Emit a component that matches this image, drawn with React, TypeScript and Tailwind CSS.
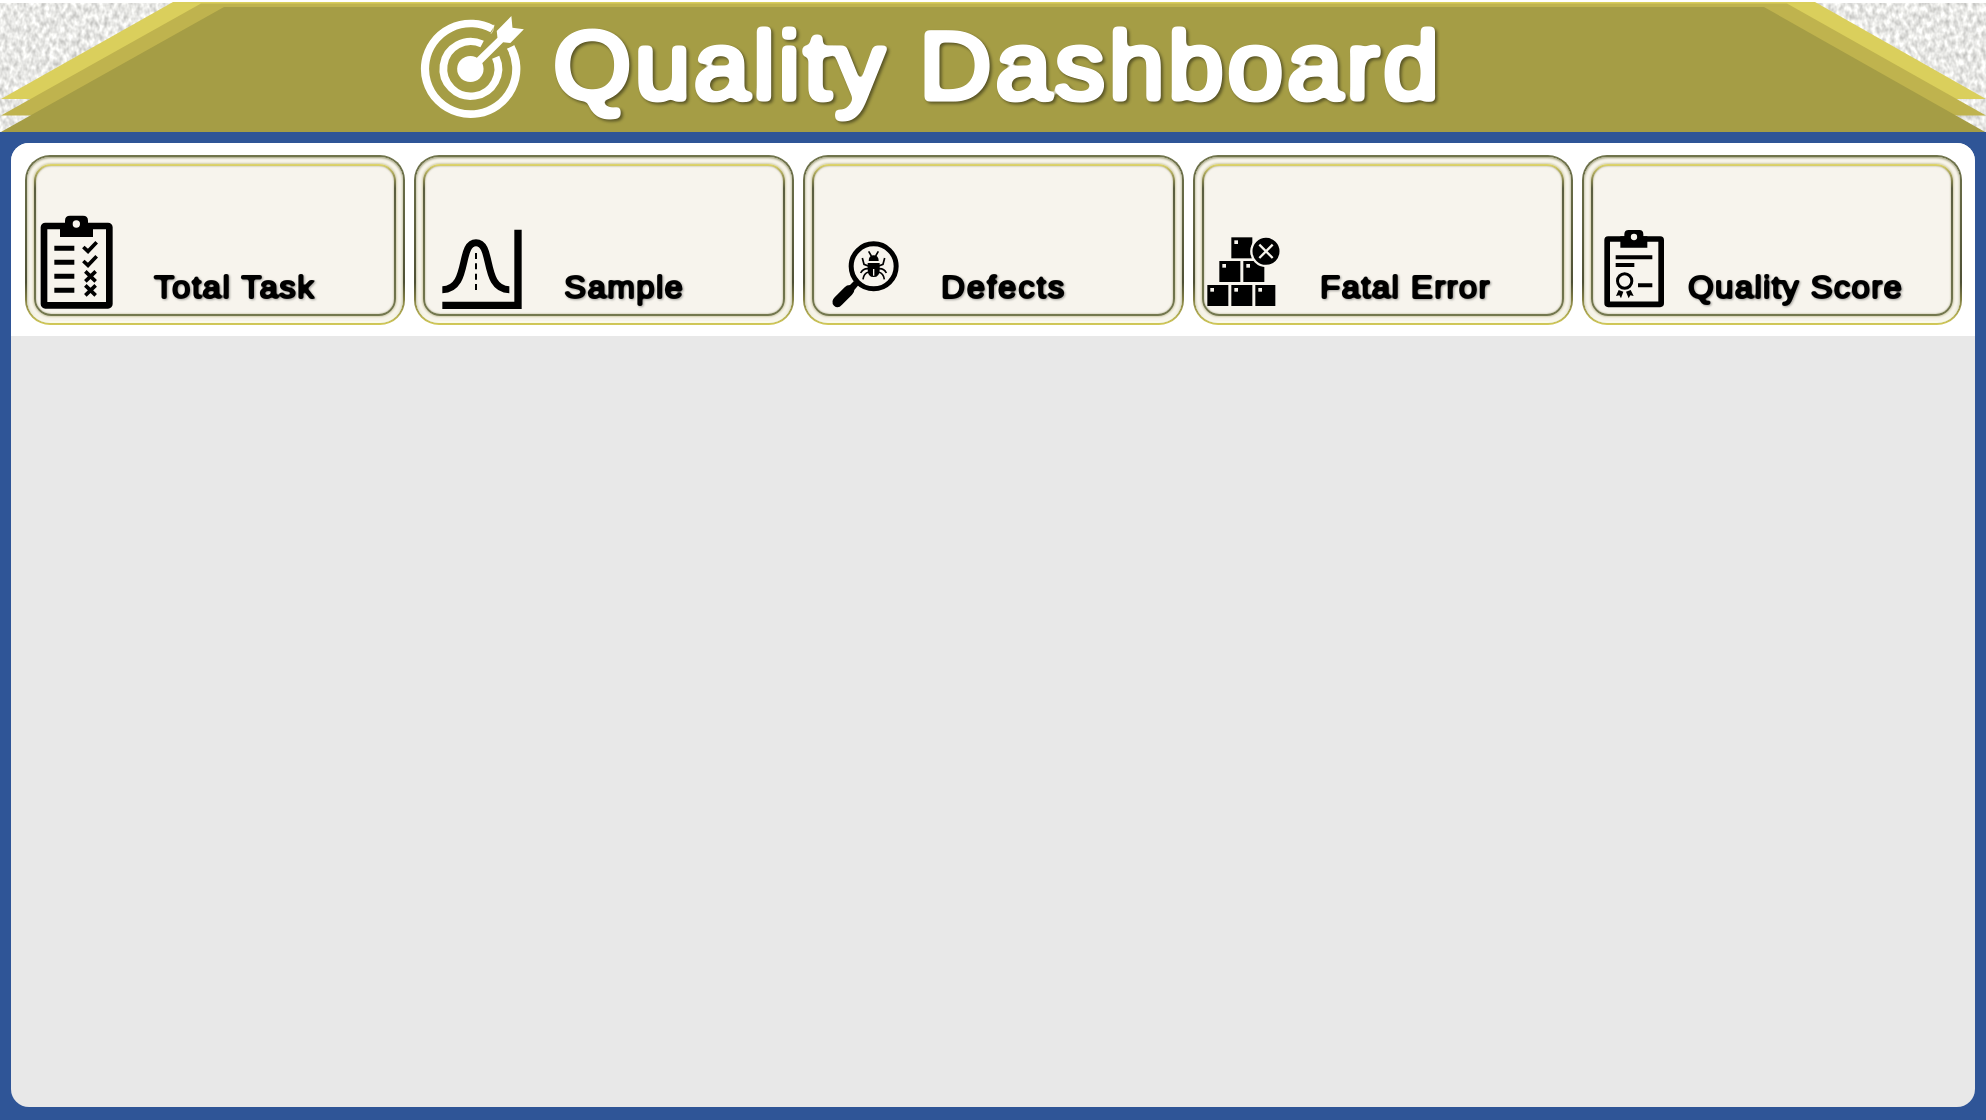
import type { ReactNode } from "react";

function Ribbon() {
  return (
    <svg className="absolute inset-0 h-full w-full" viewBox="0 0 1986 132" preserveAspectRatio="none" aria-hidden="true">
      <defs>
        <filter id="paper" x="0" y="0" width="100%" height="100%" colorInterpolationFilters="sRGB">
          <feTurbulence type="fractalNoise" baseFrequency="0.22 0.15" numOctaves="2" seed="7" />
          <feColorMatrix values="0.42 0 0 0 0.7  0.42 0 0 0 0.7  0.42 0 0 0 0.69  0 0 0 0 1" />
        </filter>
        <filter id="round-lg" x="-5%" y="-10%" width="110%" height="120%" colorInterpolationFilters="sRGB">
          <feGaussianBlur stdDeviation="2.4" />
          <feColorMatrix values="1 0 0 0 0  0 1 0 0 0  0 0 1 0 0  0 0 0 7 -3" />
        </filter>
        <filter id="round-sm" x="-5%" y="-10%" width="110%" height="120%" colorInterpolationFilters="sRGB">
          <feGaussianBlur stdDeviation="0.8" />
          <feColorMatrix values="1 0 0 0 0  0 1 0 0 0  0 0 1 0 0  0 0 0 3 -1" />
        </filter>
      </defs>
      <rect y="3" width="240" height="129" filter="url(#paper)" />
      <rect x="1746" y="3" width="240" height="129" filter="url(#paper)" />
      <path d="M1 99 173 2H1815L1986 99Z" fill="#dacf5c" />
      <path d="M1 115.5 201 3.500H1787L1986 115.5Z" fill="#bfb34e" />
      <path d="M0 132.5 224 7H1764L1986 132.5Z" fill="#a59d45" />
    </svg>
  );
}

function TargetIcon() {
  return (
    <svg className="h-[104px] w-[107px] shrink-0" viewBox="54 45 300 312" preserveAspectRatio="none" fill="none" stroke="#fff" aria-hidden="true">
      <path d="M260 87A128 136 0 1 0 311 141" strokeWidth="23" />
      <path d="M231 132A77 82 0 1 0 269 172" strokeWidth="22" />
      <ellipse cx="198" cy="207" rx="37" ry="39" fill="#fff" stroke="none" />
      <path d="M272 93 313 48 316 83 348 88 310 129 290 127 224 197 209 181 274 113Z" fill="#fff" stroke="none" />
      <path d="M256 101 261 92 264 74M302 147 312 145 321 137" strokeWidth="2" />
    </svg>
  );
}

function IconBox({ viewBox, children }: { viewBox: string; children: ReactNode }) {
  return (
    <svg className="mb-[1px] ml-[1px] h-[110px] w-[90px] shrink-0 overflow-visible" viewBox={viewBox} fill="#000" aria-hidden="true">
      {children}
    </svg>
  );
}

function TaskIcon() {
  return (
    <IconBox viewBox="81 189 270 330">
      <rect x="102" y="258" width="196" height="238" rx="4" fill="none" stroke="#000" strokeWidth="20" />
      <path d="M150 291V250H165V242Q165 227 180 227H219Q234 227 234 242V250H249V291Z" />
      <circle cx="199" cy="252" r="11" fill="#f7f4ed" />
      <path d="M133 325H193M133 367H193M133 409H193M133 451H193" stroke="#000" strokeWidth="15" />
      <path d="M220 321 234 334 260 307M220 363 234 376 260 349M226 394 257 424M257 394 226 424M226 436 257 466M257 436 226 466" fill="none" stroke="#000" strokeWidth="11" />
    </IconBox>
  );
}

function CurveIcon() {
  return (
    <IconBox viewBox="48 189 270 330">
      <path d="M97 449C180 449 145 308 198 308S216 449 298 449" fill="none" stroke="#000" strokeWidth="21" />
      <path d="M198 339V452" stroke="#000" strokeWidth="6" strokeDasharray="18 13" />
      <path d="M313 269H335V507H97V485H313Z" />
    </IconBox>
  );
}

function BugIcon() {
  return (
    <IconBox viewBox="46 189 270 330">
      <circle cx="222" cy="379" r="67.5" fill="none" stroke="#000" strokeWidth="15" />
      <path d="M163 423 176 436 164 450Q164 458 157 464L127 494Q115 508 103 497Q92 485 105 472L135 442Q141 435 151 435Z" />
      <path d="M207 363Q207 346 222 346T237 363Z" />
      <path fillRule="evenodd" d="M204 369H240V389Q240 411 222 411T204 389ZM220 387V407H224V387Z" />
      <path d="M207 334 215 348M236 334 228 348M188 354 193 373 206 378M255 354 250 373 237 378M206 386Q190 385 183 399M237 386Q254 385 260 399M207 396Q192 400 190 418M236 396Q252 400 254 418" fill="none" stroke="#000" strokeWidth="5" />
    </IconBox>
  );
}

const boxes = [
  [123, 292],
  [87, 363],
  [159, 363],
  [51, 435],
  [123, 435],
  [195, 435],
];

function BoxesIcon() {
  return (
    <IconBox viewBox="44 189 270 330">
      {boxes.map(([x, y]) => (
        <g key={`${x}-${y}`}>
          <rect x={x} y={y} width={x === 195 ? 60 : 63} height="63" />
          <rect x={x + 9} y={y + 9} width="11" height="11" fill="#f7f4ed" />
        </g>
      ))}
      <circle cx="227" cy="334" r="44" stroke="#f7f4ed" strokeWidth="7" />
      <path d="M207 314 247 354M247 314 207 354" stroke="#f7f4ed" strokeWidth="7" />
    </IconBox>
  );
}

function ScoreIcon() {
  return (
    <IconBox viewBox="71 189 270 330">
      <rect x="110.500" y="297" width="162" height="196" rx="3" fill="none" stroke="#000" strokeWidth="17" />
      <path d="M150 323V289H162V283Q162 270 175 270H207Q219 270 219 283V289H231V323Z" />
      <circle cx="191" cy="291" r="9.500" fill="#f7f4ed" />
      <path d="M136 352H246M136 375H192M203 436H246" stroke="#000" strokeWidth="12" />
      <circle cx="163" cy="423" r="21.500" fill="none" stroke="#000" strokeWidth="9" />
      <path d="M145 450 159 455 152 475 147 466 137 468ZM181 450 167 455 175 475 180 466 190 468Z" />
    </IconBox>
  );
}

function MetricCard({ icon, label, place }: { icon: ReactNode; label: string; place: string }) {
  return (
    <section className="h-[170px] flex-1 rounded-[25px] bg-linear-to-b from-[#70744c] via-[#4f5136] via-75% to-[#d3ca58] p-[2px]">
      <div className="h-full rounded-[23px] bg-[#f7f4ea] p-[7px] shadow-[inset_0_1px_2px_#a9a987,inset_0_-2px_2px_#fffff0,inset_0_0_3px_#b5b393]">
        <div className="h-full rounded-[17px] bg-linear-to-b from-[#e0d66c] via-[#5b5e40] via-16% to-[#74784f] p-[2px] shadow-[0_0_2px_1px_#d3cfad]">
          <div className="flex h-full items-end rounded-[15px] bg-[#f7f4ed] shadow-[inset_0_0_2px_#a3a17c]">
            {icon}
            <h2 className={`mb-[9px] origin-left scale-x-[1.04] whitespace-nowrap text-[32px] leading-[36px] text-black [-webkit-text-stroke:2.100px_black] [filter:url(#round-sm)_drop-shadow(1px_1px_1px_rgb(0_0_0/0.35))] ${place}`}>
              {label}
            </h2>
          </div>
        </div>
      </div>
    </section>
  );
}

export default function App() {
  return (
    <main className="flex h-[1120px] w-[1986px] flex-col overflow-hidden bg-[#2f5597] font-['Liberation_Sans',sans-serif]">
      <header className="relative h-[132px] shrink-0 bg-white">
        <Ribbon />
        <div className="relative flex items-start pl-[419px] pt-[15px]">
          <TargetIcon />
          <h1 className="ml-[27px] mt-[-4px] flex origin-left scale-x-[1.05] whitespace-pre text-[96px] leading-[110px] text-white [-webkit-text-stroke:5.200px_white] [filter:url(#round-lg)_drop-shadow(2px_2px_1.500px_rgb(0_0_0/0.45))]">
            <span className="tracking-[2.900px]">Quality </span>
            <span className="tracking-[3.200px]">Dashboard</span>
          </h1>
        </div>
      </header>
      <div className="mx-[11px] mb-[13px] mt-[11px] flex flex-1 flex-col overflow-hidden rounded-[18px] bg-[#e8e8e8]">
        <div className="flex h-[193px] shrink-0 gap-[9px] bg-white pl-[14px] pr-[13px] pt-[12px]">
          <MetricCard icon={<TaskIcon />} label="Total Task" place="ml-[27px] tracking-[1.350px]" />
          <MetricCard icon={<CurveIcon />} label="Sample" place="ml-[48px] tracking-[1.200px]" />
          <MetricCard icon={<BugIcon />} label="Defects" place="ml-[36px] tracking-[1.700px]" />
          <MetricCard icon={<BoxesIcon />} label="Fatal Error" place="ml-[25px] tracking-[1.200px]" />
          <MetricCard icon={<ScoreIcon />} label="Quality Score" place="ml-[4px] tracking-[1.150px]" />
        </div>
      </div>
    </main>
  );
}
